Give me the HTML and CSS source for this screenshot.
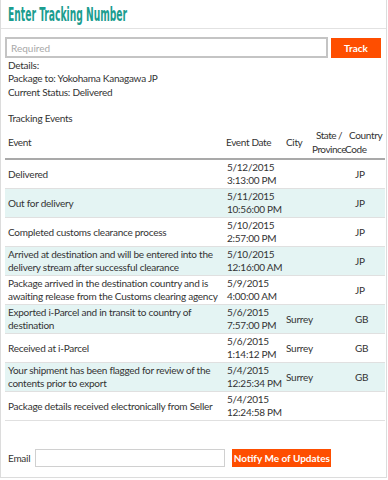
FILE: index.html
```html
<!DOCTYPE html>
<html lang="en">
<head>
  <meta charset="UTF-8" />
  <title>Enter Tracking Number</title>
  <link rel="stylesheet" href="styles.css">
</head>
<body>
  <div class="frame">

    <!-- Title -->
    <div class="title-bar">
      <h1>Enter Tracking Number</h1>
    </div>

    <div class="content">
      <!-- Search -->
      <div class="search-row">
        <input type="text" class="track-input" placeholder="Required" />
        <button class="btn track-btn">Track</button>
      </div>

      <div class="details">
        <div>Details:</div>
        <div>Package to: Yokohama Kanagawa JP</div>
        <div>Current Status: Delivered</div>
      </div>

      <div class="events-label">Tracking Events</div>

      <table class="events">
        <thead>
          <tr>
            <th class="c-event">Event</th>
            <th class="c-date">Event Date</th>
            <th class="c-city">City</th>
            <th class="c-state"><span class="indent">State /</span><br>Province</th>
            <th class="c-country"><span class="indent">Country</span><br>Code</th>
          </tr>
        </thead>
        <tbody>
          <tr>
            <td>Delivered</td>
            <td class="dt">5/12/2015<br>3:13:00 PM</td>
            <td></td>
            <td></td>
            <td class="cc">JP</td>
          </tr>
          <tr>
            <td>Out for delivery</td>
            <td class="dt">5/11/2015<br>10:56:00 PM</td>
            <td></td>
            <td></td>
            <td class="cc">JP</td>
          </tr>
          <tr>
            <td>Completed customs clearance process</td>
            <td class="dt">5/10/2015<br>2:57:00 PM</td>
            <td></td>
            <td></td>
            <td class="cc">JP</td>
          </tr>
          <tr>
            <td>Arrived at destination and will be entered into the delivery stream after successful clearance</td>
            <td class="dt">5/10/2015<br>12:16:00 AM</td>
            <td></td>
            <td></td>
            <td class="cc">JP</td>
          </tr>
          <tr>
            <td>Package arrived in the destination country and is awaiting release from the Customs clearing agency</td>
            <td class="dt">5/9/2015<br>4:00:00 AM</td>
            <td></td>
            <td></td>
            <td class="cc">JP</td>
          </tr>
          <tr>
            <td>Exported i-Parcel and in transit to country of destination</td>
            <td class="dt">5/6/2015<br>7:57:00 PM</td>
            <td class="city">Surrey</td>
            <td></td>
            <td class="cc">GB</td>
          </tr>
          <tr>
            <td>Received at i-Parcel</td>
            <td class="dt">5/6/2015<br>1:14:12 PM</td>
            <td class="city">Surrey</td>
            <td></td>
            <td class="cc">GB</td>
          </tr>
          <tr>
            <td>Your shipment has been flagged for review of the contents prior to export</td>
            <td class="dt">5/4/2015<br>12:25:34 PM</td>
            <td class="city">Surrey</td>
            <td></td>
            <td class="cc">GB</td>
          </tr>
          <tr>
            <td>Package details received electronically from Seller</td>
            <td class="dt">5/4/2015<br>12:24:58 PM</td>
            <td></td>
            <td></td>
            <td class="cc"></td>
          </tr>
        </tbody>
      </table>

      <!-- Notify -->
      <div class="notify-row">
        <label class="email-label">Email</label>
        <input type="text" class="email-input" />
        <button class="btn notify-btn">Notify Me of Updates</button>
      </div>
    </div>
  </div>
</body>
</html>
```

FILE: styles.css
```css
html, body {
  margin: 0;
  padding: 0;
  background: #fff;
  font-family: Lato, "Open Sans", Arial, sans-serif;
  font-size: 10px;
  letter-spacing: -0.25px;
  color: #333;
}

.frame {
  width: 385px;
  height: 477px;
  border: 1px solid #dcdcdc;
  border-top: none;
  overflow: hidden;
}

.title-bar {
  height: 28px;
  border-bottom: 1px solid #e2e2e2;
  padding: 0 7px;
  display: flex;
  align-items: center;
}

.title-bar h1 {
  margin: 0;
  font-family: "DejaVu Sans Condensed", "DejaVu Sans", sans-serif;
  font-weight: bold;
  font-size: 20px;
  letter-spacing: 0;
  color: #1b9d8f;
  white-space: nowrap;
  transform: scaleX(0.51);
  transform-origin: left center;
}

.content {
  padding: 8px 0 0 4px;
}

.search-row {
  display: flex;
  align-items: center;
  gap: 3px;
}

.track-input {
  width: 323px;
  height: 21px;
  box-sizing: border-box;
  border: 2px solid #c4c4c4;
  padding: 0 4px;
  font-family: Lato, "Open Sans", Arial, sans-serif;
  font-size: 10px;
  outline: none;
}

.track-input::placeholder {
  color: #a8a8a8;
}

.btn {
  background: #fe4e00;
  color: #fff;
  border: none;
  font-family: Lato, "Open Sans", Arial, sans-serif;
  font-weight: bold;
  font-size: 10px;
  white-space: nowrap;
  padding: 0;
}

.track-btn {
  width: 50px;
  height: 20px;
}

.details {
  padding: 1px 3px 0 3px;
  line-height: 13.4px;
}

.events-label {
  padding: 0 3px;
  margin-top: 13px;
  line-height: 13px;
}

.events {
  width: 380px;
  table-layout: fixed;
  border-collapse: collapse;
  margin-top: 1px;
  line-height: 13px;
}

.events th,
.events td {
  box-sizing: border-box;
}

.events th {
  font-weight: normal;
  text-align: left;
  vertical-align: middle;
  white-space: nowrap;
  padding: 2px 0 2px 3px;
  line-height: 14px;
  letter-spacing: -0.35px;
  border-bottom: 2px solid #a9a9a9;
}

.events th.c-event { width: 219px; }
.events th.c-date { width: 58px; padding-left: 2px; }
.events th.c-city { width: 29px; padding-left: 4px; }
.events th.c-state { width: 34px; padding-left: 1px; letter-spacing: -0.5px; }
.events th.c-country { width: 40px; padding-left: 0; }

.events th .indent {
  padding-left: 4px;
}

.events td {
  padding: 1px 0 1px 3px;
  vertical-align: middle;
  border-bottom: 1px solid #e0e0e0;
  height: 28px;
}

.events td.dt {
  white-space: nowrap;
}

.events td.city {
  padding-left: 4px;
  overflow: visible;
}

.events tbody tr:nth-child(even) td {
  background: #e4f4f3;
}

.events td.cc {
  padding-left: 10px;
}

.notify-row {
  display: flex;
  align-items: center;
  margin-top: 28px;
  padding-left: 3px;
}

.email-label {
  margin-right: 5px;
}

.email-input {
  width: 190px;
  height: 18px;
  box-sizing: border-box;
  border: 1px solid #d0d0d0;
  margin-right: 7px;
}

.notify-btn {
  width: 99px;
  height: 18px;
}
```
